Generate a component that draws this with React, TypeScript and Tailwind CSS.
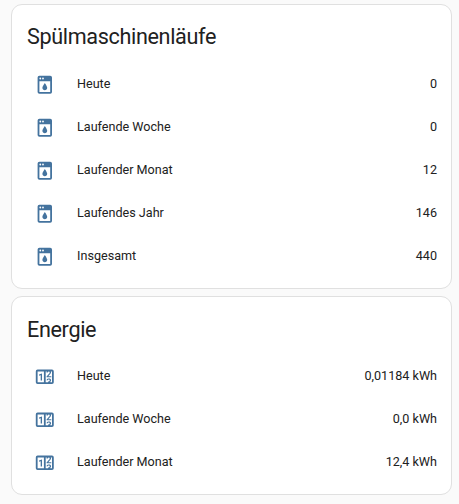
import React from 'react';

const DISHWASHER =
  'M18,2H6A2,2 0 0,0 4,4V20A2,2 0 0,0 6,22H18A2,2 0 0,0 20,20V4A2,2 0 0,0 18,2M10,4A1,1 0 0,1 11,5A1,1 0 0,1 10,6A1,1 0 0,1 9,5A1,1 0 0,1 10,4M7,4A1,1 0 0,1 8,5A1,1 0 0,1 7,6A1,1 0 0,1 6,5A1,1 0 0,1 7,4M18,20H6V8H18V20M14.67,15.33C14.69,16.03 14.41,16.71 13.91,17.21C12.86,18.26 11.15,18.27 10.09,17.21C9.59,16.71 9.31,16.03 9.33,15.33C9.4,14.62 9.63,13.94 10,13.33C10.37,12.5 10.81,11.73 11.33,11L12,10C13.79,12.59 14.67,14.36 14.67,15.33';

const COUNTER =
  'M4,4H20A2,2 0 0,1 22,6V18A2,2 0 0,1 20,20H4A2,2 0 0,1 2,18V6A2,2 0 0,1 4,4M4,6V18H11V6H4M20,18V6H18.76C19,6.54 18.95,7.07 18.95,7.13C18.88,7.8 18.41,8.5 18.24,8.75L15.91,11.3L19.23,11.28L19.24,12.5L14.04,12.47L14,11.47C14,11.47 17.05,8.24 17.2,7.95C17.34,7.67 17.91,6 16.5,6C15.27,6.05 15.41,7.3 15.41,7.3L13.87,7.31C13.87,7.31 13.88,6.65 14.25,6H13V18H15.58L15.57,17.14L16.54,17.13C16.54,17.13 17.45,16.97 17.46,16.08C17.46,15.08 16.65,15.08 16.5,15.08C16.37,15.08 15.43,15.13 15.43,15.95H13.91C13.91,15.95 13.95,13.89 16.5,13.89C19.1,13.89 18.96,15.91 18.96,15.91C18.96,15.91 19,17.16 17.85,17.63L18.37,18H20M8.92,16H7.42V10.2L5.62,10.76V9.53L8.76,8.41H8.92V16Z';

type Row = { name: string; value: string };

const runs: Row[] = [
  { name: 'Heute', value: '0' },
  { name: 'Laufende Woche', value: '0' },
  { name: 'Laufender Monat', value: '12' },
  { name: 'Laufendes Jahr', value: '146' },
  { name: 'Insgesamt', value: '440' },
];

const energy: Row[] = [
  { name: 'Heute', value: '0,01184 kWh' },
  { name: 'Laufende Woche', value: '0,0 kWh' },
  { name: 'Laufender Monat', value: '12,4 kWh' },
];

function EntitiesCard({ title, icon, rows }: { title: string; icon: string; rows: Row[] }) {
  return (
    <section className="rounded-[11px] border border-[#e0e0e0] bg-white pr-[14px] pb-[14px] pl-[15px]">
      <h1 className="pt-[10.4px] pb-[7.6px] text-[21.6px] leading-[43px] tracking-[-0.016em]">{title}</h1>
      <ul className="flex flex-col gap-[7px]">
        {rows.map((row) => (
          <li key={row.name} className="flex h-9 items-center text-[12.6px] leading-[18px]">
            <div className="flex w-9 shrink-0 justify-center pt-px pr-[0.6px]">
              <svg className="h-[21.6px] w-[21.6px]" viewBox="0 0 24 24" fill="#44739e">
                <path d={icon} />
              </svg>
            </div>
            <span className="ml-[14px] flex-1">{row.name}</span>
            <span>{row.value}</span>
          </li>
        ))}
      </ul>
    </section>
  );
}

export default function App() {
  return (
    <main className="flex min-h-screen flex-col gap-[7.2px] bg-[#fafafa] pt-1 pr-[7px] pl-[11px] font-[Roboto,sans-serif] text-[#212121]">
      <EntitiesCard title="Spülmaschinenläufe" icon={DISHWASHER} rows={runs} />
      <EntitiesCard title="Energie" icon={COUNTER} rows={energy} />
    </main>
  );
}
